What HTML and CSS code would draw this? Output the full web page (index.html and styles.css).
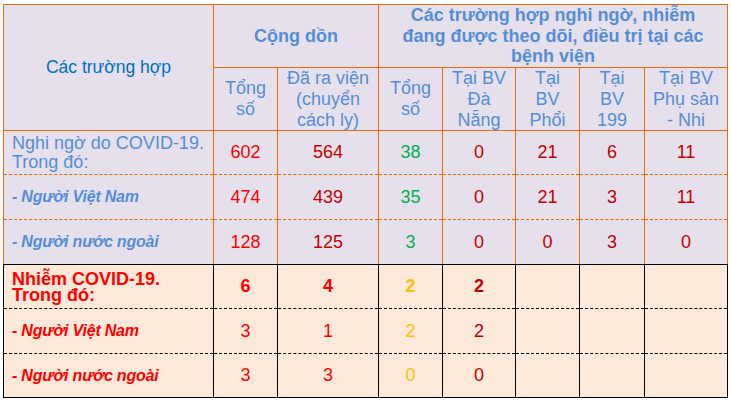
FILE: index.html
```html
<!DOCTYPE html>
<html lang="vi">
<head>
<meta charset="utf-8">
<title>COVID-19</title>
<link rel="stylesheet" href="styles.css">
</head>
<body>
<table class="stats">
  <colgroup>
    <col class="c-case">
    <col class="c-total">
    <col class="c-out">
    <col class="c-total">
    <col class="c-dn">
    <col class="c-total">
    <col class="c-199">
    <col class="c-ps">
  </colgroup>
  <thead>
    <tr class="h1">
      <th rowspan="2" class="case-head">Các trường hợp</th>
      <th colspan="2" class="group">Cộng dồn</th>
      <th colspan="5" class="group">Các trường hợp nghi ngờ, nhiễm<br>đang được theo dõi, điều trị tại các<br>bệnh viện</th>
    </tr>
    <tr class="h2">
      <th>Tổng<br>số</th>
      <th>Đã ra viện<br>(chuyển<br>cách ly)</th>
      <th>Tổng<br>số</th>
      <th>Tại BV<br>Đà<br>Nẵng</th>
      <th>Tại<br>BV<br>Phổi</th>
      <th>Tại<br>BV<br>199</th>
      <th>Tại BV<br>Phụ sản<br>- Nhi</th>
    </tr>
  </thead>
  <tbody class="suspect">
    <tr class="r44">
      <td class="label main">Nghi ngờ do COVID-19.<br>Trong đó:</td>
      <td class="n red">602</td>
      <td class="n dark">564</td>
      <td class="n green">38</td>
      <td class="n dark">0</td>
      <td class="n dark">21</td>
      <td class="n dark">6</td>
      <td class="n dark">11</td>
    </tr>
    <tr class="r45">
      <td class="label sub">- Người Việt Nam</td>
      <td class="n red">474</td>
      <td class="n dark">439</td>
      <td class="n green">35</td>
      <td class="n dark">0</td>
      <td class="n dark">21</td>
      <td class="n dark">3</td>
      <td class="n dark">11</td>
    </tr>
    <tr class="r45">
      <td class="label sub">- Người nước ngoài</td>
      <td class="n red">128</td>
      <td class="n dark">125</td>
      <td class="n green">3</td>
      <td class="n dark">0</td>
      <td class="n dark">0</td>
      <td class="n dark">3</td>
      <td class="n dark">0</td>
    </tr>
  </tbody>
  <tbody class="infected">
    <tr class="r44">
      <td class="label main">Nhiễm COVID-19.<br>Trong đó:</td>
      <td class="n red b">6</td>
      <td class="n red b">4</td>
      <td class="n amber b">2</td>
      <td class="n dark b">2</td>
      <td></td>
      <td></td>
      <td></td>
    </tr>
    <tr class="r45">
      <td class="label sub">- Người Việt Nam</td>
      <td class="n red">3</td>
      <td class="n red">1</td>
      <td class="n amber">2</td>
      <td class="n dark">2</td>
      <td></td>
      <td></td>
      <td></td>
    </tr>
    <tr class="r44">
      <td class="label sub">- Người nước ngoài</td>
      <td class="n red">3</td>
      <td class="n red">3</td>
      <td class="n amber">0</td>
      <td class="n dark">0</td>
      <td></td>
      <td></td>
      <td></td>
    </tr>
  </tbody>
</table>
</body>
</html>
```

FILE: styles.css
```css
html, body {
  margin: 0;
  padding: 0;
  background: #ffffff;
}

body {
  font-family: "Liberation Sans", Arial, sans-serif;
}

.stats {
  margin: 4px 0 0 3px;
  border-collapse: collapse;
  table-layout: fixed;
  width: 725px;
}

.c-case { width: 210px; }
.c-total { width: 64px; }
.c-out { width: 101px; }
.c-dn { width: 73px; }
.c-199 { width: 65px; }
.c-ps { width: 83px; }

.stats th,
.stats td {
  border: 1px solid #E46C0A;
  padding: 0 4px;
  vertical-align: middle;
  text-align: center;
}

.stats thead th {
  background: #E6E0EC;
  color: #558ED5;
  font-size: 18px;
  font-weight: normal;
  line-height: 20.7px;
}

.stats thead .group {
  font-weight: bold;
}

.stats thead .case-head {
  color: #0070C0;
  font-size: 17.5px;
}

.h1 { height: 63px; }
.h2 { height: 63px; }
.r44 { height: 44px; }
.r45 { height: 45px; }

.suspect td {
  background: #E6E0EC;
}

.suspect tr:not(:last-child) td {
  border-bottom-style: dashed;
}

.suspect tr + tr td {
  border-top-style: dashed;
}

.suspect tr:last-child td {
  border-bottom-color: #000000;
}

.infected td {
  background: #FDE9D9;
  border-color: #000000;
}

.infected tr:not(:last-child) td {
  border-bottom-style: dashed;
}

.infected tr + tr td {
  border-top-style: dashed;
}

.stats .label {
  text-align: left;
  padding-left: 8px;
}

.suspect .label { color: #558ED5; }
.infected .label { color: #FF0000; }

.stats .label.main {
  font-size: 18px;
  line-height: 18.5px;
}

.stats .infected .label.main {
  font-weight: bold;
  line-height: 16px;
}

.stats .label.sub {
  font-size: 16px;
  font-weight: bold;
  font-style: italic;
  letter-spacing: -0.2px;
}

.n {
  font-size: 18px;
}

.b { font-weight: bold; }
.red { color: #FF0000; }
.dark { color: #C00000; }
.green { color: #00B050; }
.amber { color: #FFC000; }
```
